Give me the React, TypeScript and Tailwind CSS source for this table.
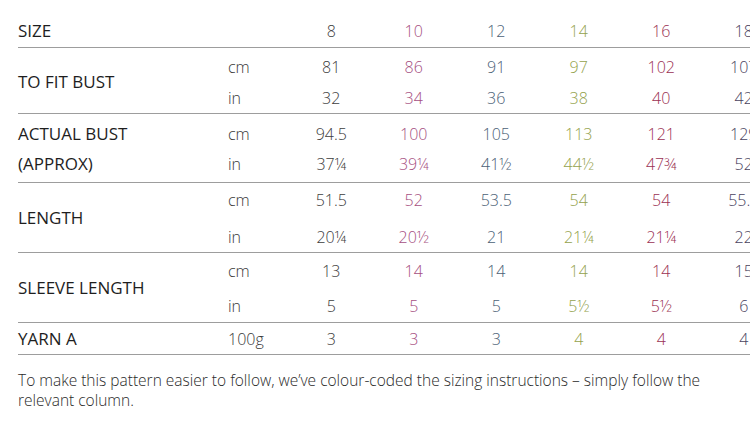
import React from 'react'

const colColors = [
  'text-[#3d3d3d]',
  'text-[#a64f7f]',
  'text-[#4b6176]',
  'text-[#94a24c]',
  'text-[#9b3153]',
  'text-[#4a4360]',
]

type Row = { unit: string; values: string[]; h: string }
type Group = { label: string[]; rows: Row[]; pad: string; labelMode: 'center' | 'lines' }

const groups: Group[] = [
  {
    label: ['TO FIT BUST'],
    pad: 'pt-[3px]',
    labelMode: 'center',
    rows: [
      { unit: 'cm', values: ['81', '86', '91', '97', '102', '107'], h: 'h-[31px]' },
      { unit: 'in', values: ['32', '34', '36', '38', '40', '42'], h: 'h-[31px]' },
    ],
  },
  {
    label: ['ACTUAL BUST', '(APPROX)'],
    pad: 'pt-[5px] pb-[3px]',
    labelMode: 'lines',
    rows: [
      { unit: 'cm', values: ['94.5', '100', '105', '113', '121', '129'], h: 'h-[30px]' },
      { unit: 'in', values: ['37¼', '39¼', '41½', '44½', '47¾', '52'], h: 'h-[30px]' },
    ],
  },
  {
    label: ['LENGTH'],
    pad: '',
    labelMode: 'center',
    rows: [
      { unit: 'cm', values: ['51.5', '52', '53.5', '54', '54', '55.5'], h: 'h-[34px]' },
      { unit: 'in', values: ['20¼', '20½', '21', '21¼', '21¼', '22'], h: 'h-[35px] pt-[4px]' },
    ],
  },
  {
    label: ['SLEEVE LENGTH'],
    pad: '',
    labelMode: 'center',
    rows: [
      { unit: 'cm', values: ['13', '14', '14', '14', '14', '15'], h: 'h-[36px]' },
      { unit: 'in', values: ['5', '5', '5', '5½', '5½', '6'], h: 'h-[33px]' },
    ],
  },
]

function Values({ values }: { values: string[] }) {
  return (
    <>
      {values.map((v, i) => (
        <div key={i} className={`w-[82.5px] shrink-0 text-center ${colColors[i]}`}>
          {v}
        </div>
      ))}
    </>
  )
}

export default function App() {
  return (
    <div
      className="w-[750px] h-[421px] overflow-hidden bg-white text-[#262626]"
      style={{ fontFamily: '"Open Sans", "Noto Sans", sans-serif' }}
    >
      <div className="ml-[18px] w-[770px] pt-[15px]">
        {/* Size header */}
        <div className="flex items-center h-[33px] border-b border-[#9d9d9d] text-[16px] font-light">
          <div className="w-[210px] shrink-0 font-medium text-[17px] text-[#1e1e1e]">SIZE</div>
          <div className="w-[62px] shrink-0" />
          <Values values={['8', '10', '12', '14', '16', '18']} />
        </div>

        {groups.map((g, gi) => (
          <div key={gi} className={`flex border-b border-[#9d9d9d] ${g.pad}`}>
            <div className="w-[210px] shrink-0 flex flex-col justify-center font-medium text-[17px] text-[#1e1e1e]">
              {g.labelMode === 'lines'
                ? g.label.map((l, li) => (
                    <div key={li} className={`${g.rows[li].h} flex items-center`}>
                      {l}
                    </div>
                  ))
                : g.label[0]}
            </div>
            <div className="flex flex-col">
              {g.rows.map((r, ri) => (
                <div key={ri} className={`flex items-center ${r.h} text-[16px] font-light`}>
                  <div className="w-[62px] shrink-0 text-[#3a3a3a]">{r.unit}</div>
                  <Values values={r.values} />
                </div>
              ))}
            </div>
          </div>
        ))}

        {/* Yarn */}
        <div className="flex items-center h-[32px] border-b border-[#9d9d9d] text-[16px] font-light">
          <div className="w-[210px] shrink-0 font-medium text-[17px] text-[#1e1e1e]">YARN A</div>
          <div className="w-[62px] shrink-0 text-[#3a3a3a]">100g</div>
          <Values values={['3', '3', '3', '4', '4', '4']} />
        </div>

        <p className="w-[700px] mt-[15px] text-[15.5px] leading-[20px] font-light text-[#2a2a2a]">
          To make this pattern easier to follow, we’ve colour-coded the sizing instructions – simply follow the
          relevant column.
        </p>
      </div>
    </div>
  )
}
